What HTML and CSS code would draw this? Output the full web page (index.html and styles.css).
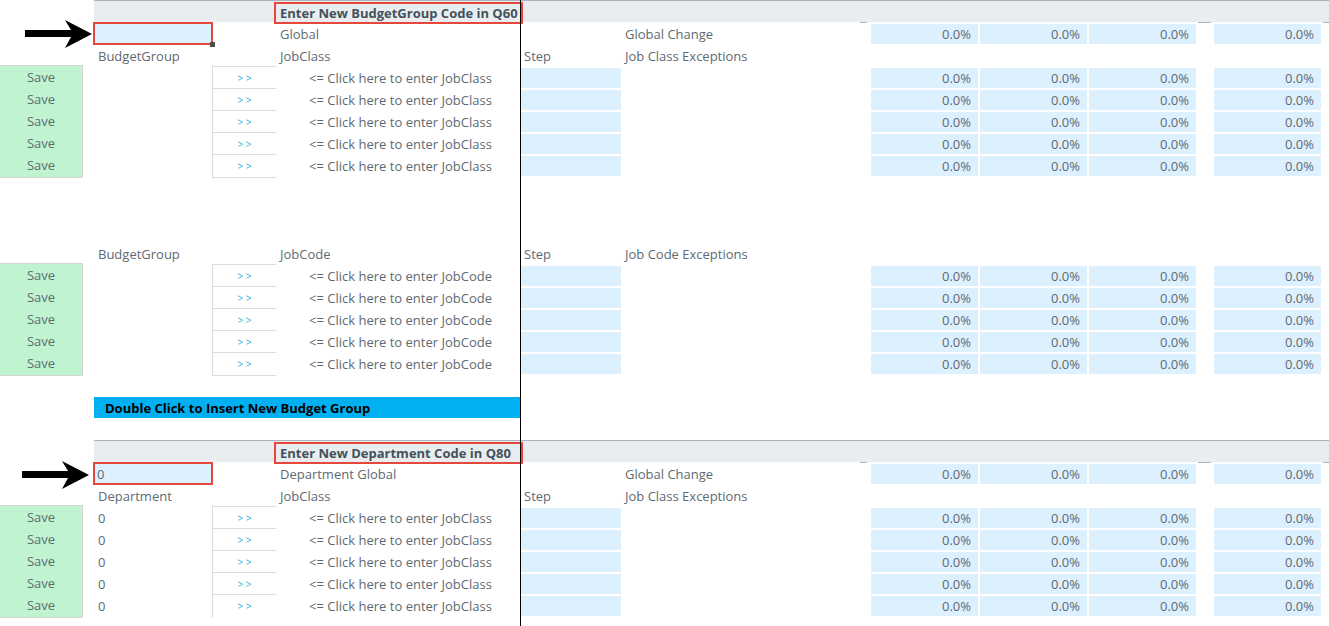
FILE: index.html
```html
<!DOCTYPE html>
<html>
<head>
<meta charset="UTF-8">
<title>Salary Exceptions</title>
<link rel="stylesheet" href="styles.css">
</head>
<body>
<div class="sheet">
	<!-- budget group: header -->
	<div class="row band">
		<div class="fill"></div>
		<div class="hdr">Enter New BudgetGroup Code in Q60</div>
	</div>
	<div class="row">
		<svg class="arrow" viewBox="0 0 100 32"><path d="M65 2 L92 16 L65 30 L71 19 L25 19 L25 12 L71 12 Z"/></svg>
		<div class="c code handle"></div>
		<div class="e lbl">Global</div>
		<div class="g lbl">Global Change</div>
		<div class="h pct">0.0%</div>
		<div class="i pct">0.0%</div>
		<div class="j pct">0.0%</div>
		<div class="l pct">0.0%</div>
	</div>
	<div class="row">
		<div class="c lbl">BudgetGroup</div>
		<div class="e lbl">JobClass</div>
		<div class="f lbl">Step</div>
		<div class="g lbl">Job Class Exceptions</div>
	</div>
	<div class="row">
		<div class="a save first">Save</div>
		<div class="d go">&gt; &gt;</div>
		<div class="e hint">&lt;= Click here to enter JobClass</div>
		<div class="f entry"></div>
		<div class="h pct">0.0%</div><div class="i pct">0.0%</div><div class="j pct">0.0%</div><div class="l pct">0.0%</div>
	</div>
	<div class="row">
		<div class="a save">Save</div>
		<div class="d go">&gt; &gt;</div>
		<div class="e hint">&lt;= Click here to enter JobClass</div>
		<div class="f entry"></div>
		<div class="h pct">0.0%</div><div class="i pct">0.0%</div><div class="j pct">0.0%</div><div class="l pct">0.0%</div>
	</div>
	<div class="row">
		<div class="a save">Save</div>
		<div class="d go">&gt; &gt;</div>
		<div class="e hint">&lt;= Click here to enter JobClass</div>
		<div class="f entry"></div>
		<div class="h pct">0.0%</div><div class="i pct">0.0%</div><div class="j pct">0.0%</div><div class="l pct">0.0%</div>
	</div>
	<div class="row">
		<div class="a save">Save</div>
		<div class="d go">&gt; &gt;</div>
		<div class="e hint">&lt;= Click here to enter JobClass</div>
		<div class="f entry"></div>
		<div class="h pct">0.0%</div><div class="i pct">0.0%</div><div class="j pct">0.0%</div><div class="l pct">0.0%</div>
	</div>
	<div class="row">
		<div class="a save">Save</div>
		<div class="d go last">&gt; &gt;</div>
		<div class="e hint">&lt;= Click here to enter JobClass</div>
		<div class="f entry"></div>
		<div class="h pct">0.0%</div><div class="i pct">0.0%</div><div class="j pct">0.0%</div><div class="l pct">0.0%</div>
	</div>
	<div class="row"></div>
	<div class="row"></div>
	<div class="row"></div>

	<!-- budget group: job codes -->
	<div class="row">
		<div class="c lbl">BudgetGroup</div>
		<div class="e lbl">JobCode</div>
		<div class="f lbl">Step</div>
		<div class="g lbl">Job Code Exceptions</div>
	</div>
	<div class="row">
		<div class="a save first">Save</div>
		<div class="d go">&gt; &gt;</div>
		<div class="e hint">&lt;= Click here to enter JobCode</div>
		<div class="f entry"></div>
		<div class="h pct">0.0%</div><div class="i pct">0.0%</div><div class="j pct">0.0%</div><div class="l pct">0.0%</div>
	</div>
	<div class="row">
		<div class="a save">Save</div>
		<div class="d go">&gt; &gt;</div>
		<div class="e hint">&lt;= Click here to enter JobCode</div>
		<div class="f entry"></div>
		<div class="h pct">0.0%</div><div class="i pct">0.0%</div><div class="j pct">0.0%</div><div class="l pct">0.0%</div>
	</div>
	<div class="row">
		<div class="a save">Save</div>
		<div class="d go">&gt; &gt;</div>
		<div class="e hint">&lt;= Click here to enter JobCode</div>
		<div class="f entry"></div>
		<div class="h pct">0.0%</div><div class="i pct">0.0%</div><div class="j pct">0.0%</div><div class="l pct">0.0%</div>
	</div>
	<div class="row">
		<div class="a save">Save</div>
		<div class="d go">&gt; &gt;</div>
		<div class="e hint">&lt;= Click here to enter JobCode</div>
		<div class="f entry"></div>
		<div class="h pct">0.0%</div><div class="i pct">0.0%</div><div class="j pct">0.0%</div><div class="l pct">0.0%</div>
	</div>
	<div class="row">
		<div class="a save">Save</div>
		<div class="d go last">&gt; &gt;</div>
		<div class="e hint">&lt;= Click here to enter JobCode</div>
		<div class="f entry"></div>
		<div class="h pct">0.0%</div><div class="i pct">0.0%</div><div class="j pct">0.0%</div><div class="l pct">0.0%</div>
	</div>
	<div class="row"></div>
	<div class="row">
		<div class="bar">Double Click to Insert New Budget Group</div>
	</div>
	<div class="row"></div>

	<!-- department -->
	<div class="row band">
		<div class="fill"></div>
		<div class="hdr">Enter New Department Code in Q80</div>
	</div>
	<div class="row">
		<svg class="arrow low" viewBox="0 0 100 32"><path d="M65 2 L92 16 L65 30 L71 19 L25 19 L25 12 L71 12 Z"/></svg>
		<div class="c code">0</div>
		<div class="e lbl">Department Global</div>
		<div class="g lbl">Global Change</div>
		<div class="h pct">0.0%</div>
		<div class="i pct">0.0%</div>
		<div class="j pct">0.0%</div>
		<div class="l pct">0.0%</div>
	</div>
	<div class="row">
		<div class="c lbl">Department</div>
		<div class="e lbl">JobClass</div>
		<div class="f lbl">Step</div>
		<div class="g lbl">Job Class Exceptions</div>
	</div>
	<div class="row">
		<div class="a save first">Save</div>
		<div class="c lbl">0</div>
		<div class="d go">&gt; &gt;</div>
		<div class="e hint">&lt;= Click here to enter JobClass</div>
		<div class="f entry"></div>
		<div class="h pct">0.0%</div><div class="i pct">0.0%</div><div class="j pct">0.0%</div><div class="l pct">0.0%</div>
	</div>
	<div class="row">
		<div class="a save">Save</div>
		<div class="c lbl">0</div>
		<div class="d go">&gt; &gt;</div>
		<div class="e hint">&lt;= Click here to enter JobClass</div>
		<div class="f entry"></div>
		<div class="h pct">0.0%</div><div class="i pct">0.0%</div><div class="j pct">0.0%</div><div class="l pct">0.0%</div>
	</div>
	<div class="row">
		<div class="a save">Save</div>
		<div class="c lbl">0</div>
		<div class="d go">&gt; &gt;</div>
		<div class="e hint">&lt;= Click here to enter JobClass</div>
		<div class="f entry"></div>
		<div class="h pct">0.0%</div><div class="i pct">0.0%</div><div class="j pct">0.0%</div><div class="l pct">0.0%</div>
	</div>
	<div class="row">
		<div class="a save">Save</div>
		<div class="c lbl">0</div>
		<div class="d go">&gt; &gt;</div>
		<div class="e hint">&lt;= Click here to enter JobClass</div>
		<div class="f entry"></div>
		<div class="h pct">0.0%</div><div class="i pct">0.0%</div><div class="j pct">0.0%</div><div class="l pct">0.0%</div>
	</div>
	<div class="row">
		<div class="a save">Save</div>
		<div class="c lbl">0</div>
		<div class="d go">&gt; &gt;</div>
		<div class="e hint">&lt;= Click here to enter JobClass</div>
		<div class="f entry"></div>
		<div class="h pct">0.0%</div><div class="i pct">0.0%</div><div class="j pct">0.0%</div><div class="l pct">0.0%</div>
	</div>
	<div class="row"></div>
</div>
</body>
</html>
```

FILE: styles.css
```css
body{
	margin: 0;
	background: #ffffff;
	font-family: "Open Sans", "Noto Sans", Arial, sans-serif;
	font-size: 13px;
	color: #5e6a73;
}

.sheet{
	position: relative;
	height: 626px;
	overflow: hidden;
}

/* frozen pane divider */
.sheet::after{
	content: "";
	position: absolute;
	left: 520px;
	top: 0;
	bottom: 0;
	width: 1px;
	background: #000000;
}

.row{
	position: relative;
	display: grid;
	grid-template-columns: 83px 11px 118px 64px 245px 101px 249px 109px 109px 107px 18px 107px 8px;
	height: 22px;
	line-height: 22px;
	white-space: nowrap;
}

.row > *{
	grid-row: 1;
}

.a{ grid-column: 1; }
.c{ grid-column: 3; }
.d{ grid-column: 4; }
.e{ grid-column: 5; }
.f{ grid-column: 6; }
.g{ grid-column: 7; }
.h{ grid-column: 8; }
.i{ grid-column: 9; }
.j{ grid-column: 10; }
.l{ grid-column: 12; }

.band .fill{
	grid-column: 3 / -1;
	height: 21px;
	background: #e9edf0;
	border-top: 1px solid #a9b3bb;
}

/* bits of the band's bottom rule that show between cells */
.band .fill::after{
	content: "";
	display: block;
	height: 1px;
	margin-top: 21px;
	background:
		linear-gradient(to right,
			transparent 766px, #a9b3bb 766px, #a9b3bb 773px,
			transparent 773px, transparent 1104px, #a9b3bb 1104px, #a9b3bb 1117px,
			transparent 1117px, transparent 1229px, #a9b3bb 1229px);
}

.hdr{
	grid-column: 5;
	margin-top: 4px;
	height: 18px;
	line-height: 18px;
	padding-left: 4px;
	font-weight: bold;
	color: #44515b;
	outline: 2.5px solid #e5473d;
	overflow: hidden;
}

.lbl{
	padding-left: 4px;
	padding-top: 1px;
}

.f.lbl, .g.lbl{
	padding-left: 3px;
}

.code{
	position: relative;
	margin: 2px 1px 0 1px;
	height: 19px;
	line-height: 20px;
	padding-left: 2px;
	padding-top: 0;
	background: #ddf0fd;
	outline: 2.5px solid #e5473d;
}

.handle::after{
	content: "";
	position: absolute;
	right: -4px;
	bottom: -4px;
	width: 5px;
	height: 5px;
	background: #4d4d4d;
}

.arrow{
	position: absolute;
	left: 0;
	top: -4px;
	width: 100px;
	height: 32px;
	fill: #000000;
}

.arrow.low{
	left: -3px;
	top: -3px;
}

.save{
	background: #c0f3d0;
	border-bottom: 1px solid #d3d6d4;
	border-right: 1px solid #d3d6d4;
	text-align: center;
	line-height: 23px;
}

.save.first{
	border-top: 1px solid #d3d6d4;
	margin-top: -1px;
}

.go{
	border-top: 1px solid #dcdcdc;
	border-left: 1px solid #dcdcdc;
	text-align: center;
	font-size: 10px;
	line-height: 22px;
	color: #2eaae3;
}

.go.last{
	border-bottom: 1px solid #dcdcdc;
}

.hint{
	text-align: center;
	padding-left: 4px;
	padding-top: 1px;
}

.entry{
	margin-top: 2px;
	width: 100px;
	height: 20px;
	background: #ddf0fd;
}

.pct{
	margin-top: 2px;
	width: 107px;
	height: 20px;
	line-height: 20px;
	box-sizing: border-box;
	padding-right: 7px;
	text-align: right;
	background: #ddf0fd;
}

.bar{
	grid-column: 3 / 6;
	margin-top: 1px;
	margin-right: 1px;
	height: 21px;
	line-height: 22px;
	padding-left: 11px;
	background: #00b0f0;
	color: #000000;
	font-weight: bold;
}
```
